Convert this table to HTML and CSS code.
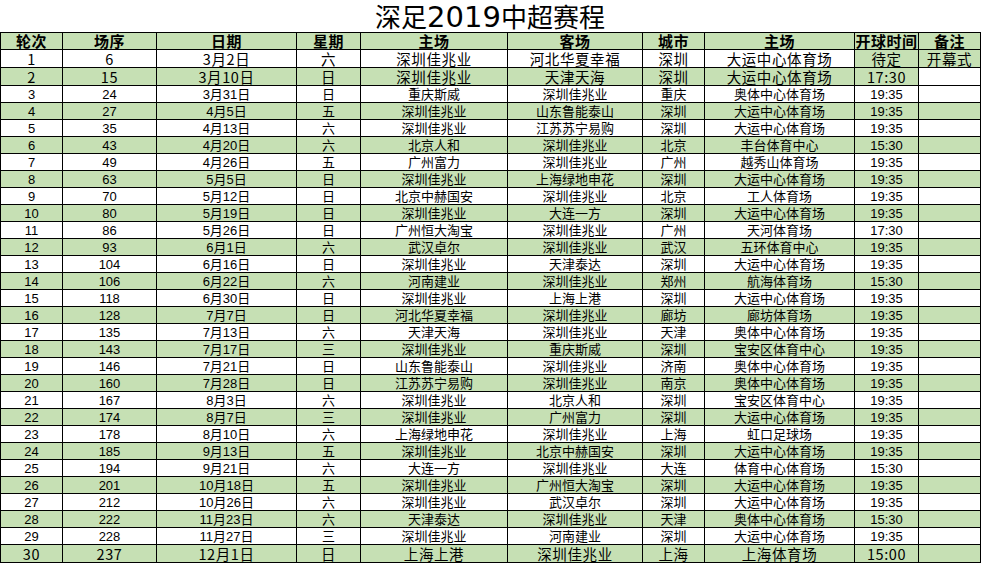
FILE: index.html
```html
<!DOCTYPE html>
<html lang="zh-CN">
<head>
<meta charset="utf-8">
<title>深足2019中超赛程</title>
<link rel="stylesheet" href="styles.css">
</head>
<body>
<div class="sheet">
  <h1 class="title">深足<span class="title-num">2019</span>中超赛程</h1>
  <table class="schedule">
    <colgroup>
      <col class="c-round"><col class="c-seq"><col class="c-date"><col class="c-week"><col class="c-home"><col class="c-away"><col class="c-city"><col class="c-venue"><col class="c-time"><col class="c-note">
    </colgroup>
    <thead>
      <tr class="head"><th>轮次</th><th>场序</th><th>日期</th><th>星期</th><th>主场</th><th>客场</th><th>城市</th><th>主场</th><th>开球时间</th><th>备注</th></tr>
    </thead>
    <tbody>
      <tr class="big"><td>1</td><td>6</td><td>3月2日</td><td>六</td><td>深圳佳兆业</td><td>河北华夏幸福</td><td>深圳</td><td>大运中心体育场</td><td class="g">待定</td><td class="g">开幕式</td></tr>
      <tr class="big g"><td>2</td><td>15</td><td>3月10日</td><td>日</td><td>深圳佳兆业</td><td>天津天海</td><td>深圳</td><td>大运中心体育场</td><td>17:30</td><td class="w"></td></tr>
      <tr><td>3</td><td>24</td><td>3月31日</td><td>日</td><td>重庆斯威</td><td>深圳佳兆业</td><td>重庆</td><td>奥体中心体育场</td><td>19:35</td><td></td></tr>
      <tr class="g"><td>4</td><td>27</td><td>4月5日</td><td>五</td><td>深圳佳兆业</td><td>山东鲁能泰山</td><td>深圳</td><td>大运中心体育场</td><td>19:35</td><td></td></tr>
      <tr><td>5</td><td>35</td><td>4月13日</td><td>六</td><td>深圳佳兆业</td><td>江苏苏宁易购</td><td>深圳</td><td>大运中心体育场</td><td>19:35</td><td></td></tr>
      <tr class="g"><td>6</td><td>43</td><td>4月20日</td><td>六</td><td>北京人和</td><td>深圳佳兆业</td><td>北京</td><td>丰台体育中心</td><td>15:30</td><td></td></tr>
      <tr><td>7</td><td>49</td><td>4月26日</td><td>五</td><td>广州富力</td><td>深圳佳兆业</td><td>广州</td><td>越秀山体育场</td><td>19:35</td><td></td></tr>
      <tr class="g"><td>8</td><td>63</td><td>5月5日</td><td>日</td><td>深圳佳兆业</td><td>上海绿地申花</td><td>深圳</td><td>大运中心体育场</td><td>19:35</td><td></td></tr>
      <tr><td>9</td><td>70</td><td>5月12日</td><td>日</td><td>北京中赫国安</td><td>深圳佳兆业</td><td>北京</td><td>工人体育场</td><td>19:35</td><td></td></tr>
      <tr class="g"><td>10</td><td>80</td><td>5月19日</td><td>日</td><td>深圳佳兆业</td><td>大连一方</td><td>深圳</td><td>大运中心体育场</td><td>19:35</td><td></td></tr>
      <tr><td>11</td><td>86</td><td>5月26日</td><td>日</td><td>广州恒大淘宝</td><td>深圳佳兆业</td><td>广州</td><td>天河体育场</td><td>17:30</td><td></td></tr>
      <tr class="g"><td>12</td><td>93</td><td>6月1日</td><td>六</td><td>武汉卓尔</td><td>深圳佳兆业</td><td>武汉</td><td>五环体育中心</td><td>19:35</td><td></td></tr>
      <tr><td>13</td><td>104</td><td>6月16日</td><td>日</td><td>深圳佳兆业</td><td>天津泰达</td><td>深圳</td><td>大运中心体育场</td><td>19:35</td><td></td></tr>
      <tr class="g"><td>14</td><td>106</td><td>6月22日</td><td>六</td><td>河南建业</td><td>深圳佳兆业</td><td>郑州</td><td>航海体育场</td><td>15:30</td><td></td></tr>
      <tr><td>15</td><td>118</td><td>6月30日</td><td>日</td><td>深圳佳兆业</td><td>上海上港</td><td>深圳</td><td>大运中心体育场</td><td>19:35</td><td></td></tr>
      <tr class="g"><td>16</td><td>128</td><td>7月7日</td><td>日</td><td>河北华夏幸福</td><td>深圳佳兆业</td><td>廊坊</td><td>廊坊体育场</td><td>19:35</td><td></td></tr>
      <tr><td>17</td><td>135</td><td>7月13日</td><td>六</td><td>天津天海</td><td>深圳佳兆业</td><td>天津</td><td>奥体中心体育场</td><td>19:35</td><td></td></tr>
      <tr class="g"><td>18</td><td>143</td><td>7月17日</td><td>三</td><td>深圳佳兆业</td><td>重庆斯威</td><td>深圳</td><td>宝安区体育中心</td><td>19:35</td><td></td></tr>
      <tr><td>19</td><td>146</td><td>7月21日</td><td>日</td><td>山东鲁能泰山</td><td>深圳佳兆业</td><td>济南</td><td>奥体中心体育场</td><td>19:35</td><td></td></tr>
      <tr class="g"><td>20</td><td>160</td><td>7月28日</td><td>日</td><td>江苏苏宁易购</td><td>深圳佳兆业</td><td>南京</td><td>奥体中心体育场</td><td>19:35</td><td></td></tr>
      <tr><td>21</td><td>167</td><td>8月3日</td><td>六</td><td>深圳佳兆业</td><td>北京人和</td><td>深圳</td><td>宝安区体育中心</td><td>19:35</td><td></td></tr>
      <tr class="g"><td>22</td><td>174</td><td>8月7日</td><td>三</td><td>深圳佳兆业</td><td>广州富力</td><td>深圳</td><td>大运中心体育场</td><td>19:35</td><td></td></tr>
      <tr><td>23</td><td>178</td><td>8月10日</td><td>六</td><td>上海绿地申花</td><td>深圳佳兆业</td><td>上海</td><td>虹口足球场</td><td>19:35</td><td></td></tr>
      <tr class="g"><td>24</td><td>185</td><td>9月13日</td><td>五</td><td>深圳佳兆业</td><td>北京中赫国安</td><td>深圳</td><td>大运中心体育场</td><td>19:35</td><td></td></tr>
      <tr><td>25</td><td>194</td><td>9月21日</td><td>六</td><td>大连一方</td><td>深圳佳兆业</td><td>大连</td><td>体育中心体育场</td><td>15:30</td><td></td></tr>
      <tr class="g"><td>26</td><td>201</td><td>10月18日</td><td>五</td><td>深圳佳兆业</td><td>广州恒大淘宝</td><td>深圳</td><td>大运中心体育场</td><td>19:35</td><td></td></tr>
      <tr><td>27</td><td>212</td><td>10月26日</td><td>六</td><td>深圳佳兆业</td><td>武汉卓尔</td><td>深圳</td><td>大运中心体育场</td><td>19:35</td><td></td></tr>
      <tr class="g"><td>28</td><td>222</td><td>11月23日</td><td>六</td><td>天津泰达</td><td>深圳佳兆业</td><td>天津</td><td>奥体中心体育场</td><td>15:30</td><td></td></tr>
      <tr><td>29</td><td>228</td><td>11月27日</td><td>三</td><td>深圳佳兆业</td><td>河南建业</td><td>深圳</td><td>大运中心体育场</td><td>19:35</td><td></td></tr>
      <tr class="big g"><td>30</td><td>237</td><td>12月1日</td><td>日</td><td>上海上港</td><td>深圳佳兆业</td><td>上海</td><td>上海体育场</td><td>15:00</td><td></td></tr>
    </tbody>
  </table>
</div>
</body>
</html>
```
FILE: styles.css
```css
html, body {
  margin: 0;
  padding: 0;
  background: #ffffff;
}

.sheet {
  width: 982px;
  height: 563px;
  overflow: hidden;
  color: #000000;
  font-family: "Liberation Sans", "Noto Sans CJK SC", sans-serif;
}

.title {
  margin: 0;
  height: 32px;
  width: 980px;
  text-align: center;
  font-family: "Noto Sans CJK SC", sans-serif;
  font-weight: normal;
  font-size: 26px;
  line-height: 32px;
  letter-spacing: 0;
}

.title-num {
  font-family: "DejaVu Sans", sans-serif;
  font-size: 29px;
}

.schedule {
  border-collapse: collapse;
  table-layout: fixed;
  width: 980px;
}

.c-round { width: 62px; }
.c-seq { width: 94px; }
.c-date { width: 140px; }
.c-week { width: 64px; }
.c-home { width: 147px; }
.c-away { width: 135px; }
.c-city { width: 62px; }
.c-venue { width: 150px; }
.c-time { width: 64px; }
.c-note { width: 62px; }

.schedule th,
.schedule td {
  border: 1px solid #000000;
  padding: 0;
  text-align: center;
  vertical-align: middle;
  white-space: nowrap;
  line-height: 15px;
}

.schedule tr {
  height: 17px;
}

.schedule td {
  font-size: 13px;
}

.head {
  height: 18px;
  background: #c6e0b4;
}

.head th {
  font-family: "Noto Sans CJK SC", sans-serif;
  font-size: 15px;
  font-weight: bold;
  line-height: 16px;
  letter-spacing: 0.5px;
}

.schedule tr.big {
  height: 18px;
}

.big td {
  font-family: "Noto Sans CJK SC", sans-serif;
  font-size: 14.5px;
  line-height: 16px;
  letter-spacing: 0.6px;
}

.g {
  background: #c6e0b4;
}

.w {
  background: #ffffff;
}
```
